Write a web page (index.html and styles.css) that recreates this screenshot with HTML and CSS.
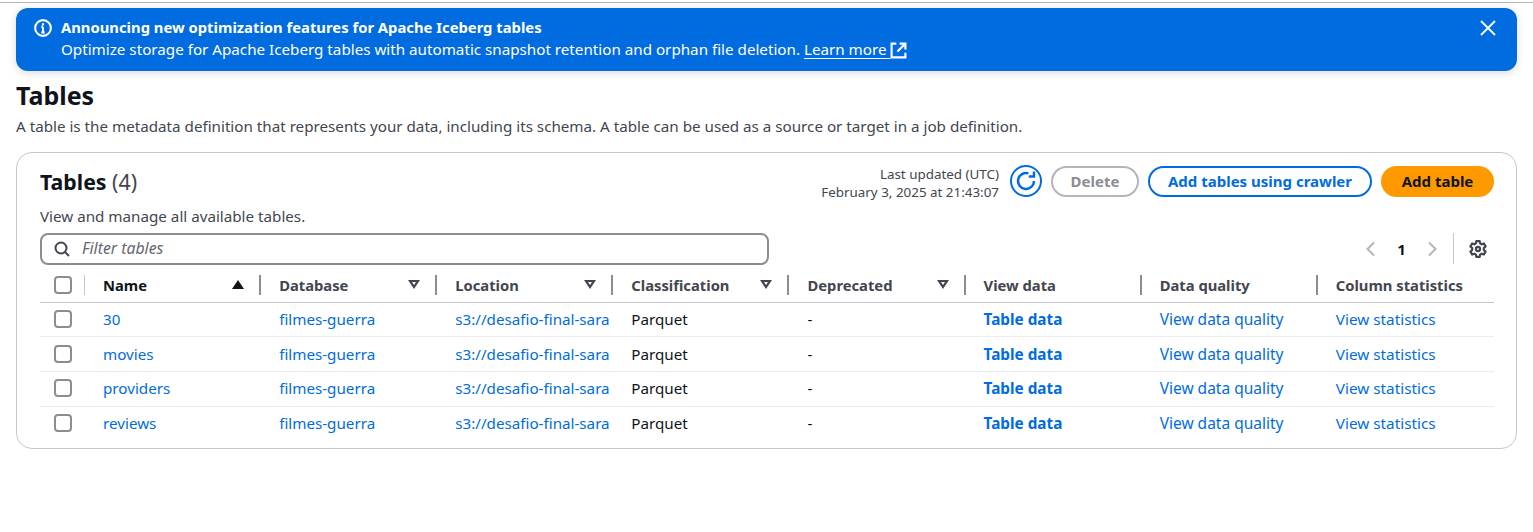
FILE: index.html
```html
<!DOCTYPE html>
<html lang="en">
<head>
    <meta charset="UTF-8">
    <title>Tables</title>
    <link rel="stylesheet" href="styles.css">
</head>
<body>
<div class="page">
    <div class="flash">
        <svg class="flash-icon" viewBox="0 0 16 16" width="18" height="18"><circle cx="8" cy="8" r="7" fill="none" stroke="#fff" stroke-width="1.800"/><path d="M8 7v5M6.500 12h3M6.500 7H8M8 3.800v2" fill="none" stroke="#fff" stroke-width="1.800"/></svg>
        <div class="flash-text">
            <div class="flash-title">Announcing new optimization features for Apache Iceberg tables</div>
            <div>Optimize storage for Apache Iceberg tables with automatic snapshot retention and orphan file deletion. <a class="learn" href="#">Learn more <svg class="ext" viewBox="0 0 16 16" width="17" height="17"><path d="M6 1.500H1.500v13h13V10M9 1.500h5.500V7M14.500 1.500 7 9" fill="none" stroke="#fff" stroke-width="2"/></svg></a></div>
        </div>
        <svg class="flash-close" viewBox="0 0 16 16" width="16" height="16"><path d="M1 1l14 14M15 1 1 15" fill="none" stroke="#fff" stroke-width="1.800"/></svg>
    </div>

    <h1 class="title">Tables</h1>
    <p class="desc">A table is the metadata definition that represents your data, including its schema. A table can be used as a source or target in a job definition.</p>

    <div class="card">
        <div class="card-head">
            <div class="card-title">
                <h2>Tables <span class="count">(4)</span></h2>
            </div>
            <div class="updated">Last updated (UTC)<br>February 3, 2025 at 21:43:07</div>
            <button class="refresh"><svg viewBox="0 0 16 16" width="22" height="22"><path d="M13.800 8A5.800 5.800 0 1 1 9.800 2.500M13.800 1v3.800H10" fill="none" stroke="#006ce0" stroke-width="1.800"/></svg></button>
            <button class="btn btn-off">Delete</button>
            <button class="btn btn-line">Add tables using crawler</button>
            <button class="btn btn-main">Add table</button>
        </div>
        <div class="card-sub">View and manage all available tables.</div>
        <div class="tools">
            <div class="filter">
                <svg viewBox="0 0 16 16" width="16" height="16"><circle cx="7" cy="7" r="5.500" fill="none" stroke="#424650" stroke-width="2"/><path d="M11 11l4 4" fill="none" stroke="#424650" stroke-width="2"/></svg>
                <span>Filter tables</span>
            </div>
            <div class="pager">
                <svg viewBox="0 0 16 16" width="16" height="16"><path d="M11 1.500 4.500 8l6.500 6.500" fill="none" stroke="#b4b4bb" stroke-width="2"/></svg>
                <b>1</b>
                <svg viewBox="0 0 16 16" width="16" height="16"><path d="M5 1.500 11.500 8 5 14.500" fill="none" stroke="#b4b4bb" stroke-width="2"/></svg>
            </div>
            <div class="gear">
                <svg viewBox="0 0 16 16" width="18" height="18"><path d="M6.500 1h3l.4 2 1.300.8 2-.7 1.500 2.600-1.500 1.400v1.800l1.500 1.400-1.500 2.600-2-.7-1.300.8-.4 2h-3l-.4-2-1.300-.8-2 .7-1.500-2.600 1.500-1.400V7.100L1.300 5.700l1.500-2.600 2 .7 1.300-.8z" fill="none" stroke="#424650" stroke-width="2" stroke-linejoin="round"/><circle cx="8" cy="8" r="1.800" fill="none" stroke="#424650" stroke-width="2"/></svg>
            </div>
        </div>

        <table class="list">
            <colgroup>
                <col class="col-check">
                <col span="8" class="col-std">
            </colgroup>
            <thead>
                <tr>
                    <th class="check"><span class="box"></span></th>
                    <th class="first">Name<span class="sort up"></span></th>
                    <th>Database<span class="sort"></span></th>
                    <th>Location<span class="sort"></span></th>
                    <th>Classification<span class="sort"></span></th>
                    <th>Deprecated<span class="sort"></span></th>
                    <th>View data</th>
                    <th>Data quality</th>
                    <th class="last">Column statistics</th>
                </tr>
            </thead>
            <tbody>
                <tr>
                    <td class="check"><span class="box"></span></td>
                    <td><a href="#">30</a></td>
                    <td><a href="#">filmes-guerra</a></td>
                    <td><a href="#">s3://desafio-final-sara</a></td>
                    <td>Parquet</td>
                    <td>-</td>
                    <td><a class="strong" href="#">Table data</a></td>
                    <td><a class="wide" href="#">View data quality</a></td>
                    <td><a class="stat" href="#">View statistics</a></td>
                </tr>
                <tr>
                    <td class="check"><span class="box"></span></td>
                    <td><a href="#">movies</a></td>
                    <td><a href="#">filmes-guerra</a></td>
                    <td><a href="#">s3://desafio-final-sara</a></td>
                    <td>Parquet</td>
                    <td>-</td>
                    <td><a class="strong" href="#">Table data</a></td>
                    <td><a class="wide" href="#">View data quality</a></td>
                    <td><a class="stat" href="#">View statistics</a></td>
                </tr>
                <tr>
                    <td class="check"><span class="box"></span></td>
                    <td><a href="#">providers</a></td>
                    <td><a href="#">filmes-guerra</a></td>
                    <td><a href="#">s3://desafio-final-sara</a></td>
                    <td>Parquet</td>
                    <td>-</td>
                    <td><a class="strong" href="#">Table data</a></td>
                    <td><a class="wide" href="#">View data quality</a></td>
                    <td><a class="stat" href="#">View statistics</a></td>
                </tr>
                <tr>
                    <td class="check"><span class="box"></span></td>
                    <td><a href="#">reviews</a></td>
                    <td><a href="#">filmes-guerra</a></td>
                    <td><a href="#">s3://desafio-final-sara</a></td>
                    <td>Parquet</td>
                    <td>-</td>
                    <td><a class="strong" href="#">Table data</a></td>
                    <td><a class="wide" href="#">View data quality</a></td>
                    <td><a class="stat" href="#">View statistics</a></td>
                </tr>
            </tbody>
        </table>
    </div>
</div>
</body>
</html>
```

FILE: styles.css
```css
*{
    margin: 0;
    padding: 0;
    box-sizing: border-box;
}
body{
    background-color: #fff;
    color: #0f141a;
    font-family: "Noto Sans", "Open Sans", sans-serif;
    font-size: 15.200px;
    line-height: 20px;
    overflow: hidden;
}
a{
    color: #006ce0;
    text-decoration: none;
}
.page{
    height: 530px;
    margin-top: 2px;
    padding: 5px 16px 0;
    border-top: 1px solid #b4b4bb;
}

/*flash*/
.flash{
    display: flex;
    height: 63px;
    padding: 8px 21px 0 18px;
    background-color: #006ce0;
    border-radius: 12px;
    color: #fff;
    box-shadow: 0 2px 8px rgba(15, 20, 26, 0.15);
}
.flash-icon{
    flex: none;
    margin: 3px 9px 0 0;
}
.flash-text{
    flex: 1;
    line-height: 22px;
}
.flash-title{
    font-size: 14.800px;
    font-weight: 700;
}
.learn{
    color: #fff;
    text-decoration: underline;
    text-underline-offset: 3px;
}
.ext{
    vertical-align: -4px;
}
.flash-close{
    flex: none;
    margin-top: 4px;
}

/*header*/
.title{
    margin-top: 8px;
    font-size: 25px;
    line-height: 32px;
    font-weight: 700;
}
.desc{
    margin-top: 5px;
    color: #424650;
}

/*card*/
.card{
    height: 297px;
    margin-top: 16px;
    padding: 13px 22px 0 23px;
    border: 1px solid #c6c6cd;
    border-radius: 16px;
}
.card-head{
    display: flex;
    align-items: center;
    height: 32px;
}
.card-title{
    flex: 1;
}
.card-title h2{
    font-size: 21.300px;
    line-height: 28px;
    font-weight: 700;
}
.count{
    font-weight: 400;
    color: #424650;
}
.updated{
    margin-top: 1px;
    font-size: 13.400px;
    line-height: 18px;
    text-align: right;
    color: #424650;
}
.refresh{
    flex: none;
    width: 32px;
    height: 32px;
    margin: -2px 9px 0 11px;
    background: #fff;
    border: 2px solid #006ce0;
    border-radius: 50%;
    display: flex;
    align-items: center;
    justify-content: center;
}
.btn{
    flex: none;
    height: 31px;
    margin-top: -2px;
    border-radius: 16px;
    font-family: inherit;
    font-size: 15px;
    font-weight: 700;
    background: #fff;
}
.btn-off{
    width: 88px;
    border: 2px solid #b4b4bb;
    color: #8c8c94;
}
.btn-line{
    width: 224px;
    margin-left: 9px;
    border: 2px solid #006ce0;
    color: #006ce0;
}
.btn-main{
    width: 113px;
    margin-left: 9px;
    border: none;
    background-color: #ff9900;
    color: #0f141a;
}
.card-sub{
    margin-top: 8px;
    color: #424650;
}
.tools{
    display: flex;
    align-items: center;
    margin-top: 7px;
    height: 31px;
}
.filter{
    display: flex;
    align-items: center;
    gap: 12px;
    width: 729px;
    height: 32px;
    padding-left: 12px;
    border: 2px solid #8c8c94;
    border-radius: 8px;
    font-size: 15.800px;
    font-style: italic;
    color: #656871;
}
.filter span{
    margin-top: -2px;
}
.pager{
    display: flex;
    align-items: center;
    gap: 18px;
    margin-left: auto;
    padding-right: 13px;
    height: 31px;
}
.pager b{
    width: 9px;
    font-size: 15px;
    text-align: center;
}
.gear{
    display: flex;
    align-items: center;
    height: 31px;
    padding: 0 7px 0 15px;
    border-left: 1px solid #c6c6cd;
}

/*table*/
.list{
    width: 1454px;
    margin-top: 4px;
    border-collapse: collapse;
    table-layout: fixed;
}
.col-check{
    width: 45px;
}
.col-std{
    width: 176px;
}
th{
    position: relative;
    height: 34px;
    padding: 0 0 0 18px;
    text-align: left;
    font-size: 14.750px;
    font-weight: 700;
    color: #424650;
    border-bottom: 1px solid #c6c6cd;
}
th.first{
    color: #0f141a;
}
th::after{
    content: "";
    position: absolute;
    right: 0;
    top: 7px;
    width: 2px;
    height: 20px;
    background-color: #8c8c94;
}
th.check::after{
    width: 1px;
    background-color: #c6c6cd;
}
th.last::after{
    display: none;
}
td{
    height: 34.800px;
    padding: 0 0 0 18px;
    white-space: nowrap;
    overflow: hidden;
    border-bottom: 1px solid #ebebf0;
}
tbody tr:nth-child(n+3) td{
    padding-bottom: 2px;
}
tbody tr:last-child td{
    border-bottom: none;
}
th.check, td.check{
    padding-left: 14px;
}
.box{
    display: block;
    width: 18px;
    height: 18px;
    border: 2px solid #8c8c94;
    border-radius: 4px;
}
.strong{
    font-size: 15.300px;
    font-weight: 700;
}
.wide{
    font-size: 15.500px;
}
.stat{
    font-size: 15.300px;
}
.sort{
    position: absolute;
    right: 17px;
    top: 12px;
    width: 0;
    height: 0;
    border-left: 6px solid transparent;
    border-right: 6px solid transparent;
    border-top: 9px solid #424650;
}
.sort::after{
    content: "";
    position: absolute;
    left: -2px;
    top: -7px;
    border-left: 2px solid transparent;
    border-right: 2px solid transparent;
    border-top: 3px solid #fff;
}
.sort.up{
    border-top: none;
    border-bottom: 9px solid #0f141a;
}
.sort.up::after{
    display: none;
}
```
